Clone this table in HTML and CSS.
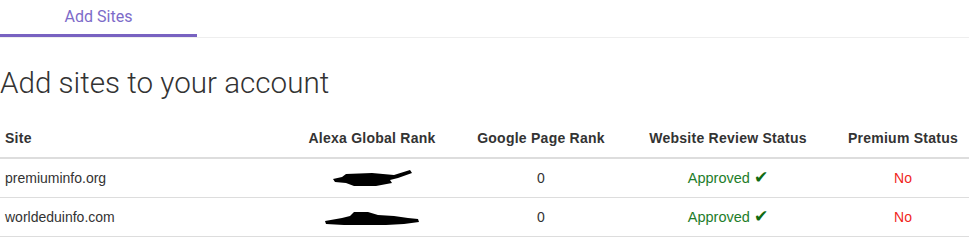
FILE: index.html
```html
<!DOCTYPE html>
<html lang="en">
<head>
    <meta charset="UTF-8">
    <meta name="viewport" content="width=device-width, initial-scale=1.0">
    <title>Add Sites</title>
    <link rel="stylesheet" href="styles.css">
</head>
<body>
    <div class="tabs">
        <a class="tab active" href="#">Add Sites</a>
    </div>

    <h1>Add sites to your account</h1>

    <table class="sites-table">
        <thead>
            <tr>
                <th class="col-site">Site</th>
                <th class="col-alexa">Alexa Global Rank</th>
                <th class="col-google">Google Page Rank</th>
                <th class="col-review">Website Review Status</th>
                <th class="col-premium">Premium Status</th>
            </tr>
        </thead>
        <tbody>
            <tr>
                <td>premiuminfo.org</td>
                <td class="center">
                    <!-- rank hidden -->
                    <svg class="redact" width="80" height="18" viewBox="0 0 80 18">
                        <path d="M1 9 L10 7 L14 4 L40 3 L62 5 L78 0 L80 3 L66 8 L58 10 L60 13 L44 16 L22 16 L14 13 L3 12 Z" fill="#000"/>
                    </svg>
                </td>
                <td class="center">0</td>
                <td class="center approved">Approved <span class="check">&#10004;</span></td>
                <td class="center no">No</td>
            </tr>
            <tr>
                <td>worldeduinfo.com</td>
                <td class="center">
                    <svg class="redact" width="96" height="18" viewBox="0 0 96 18">
                        <path d="M1 12 L18 9 L26 7 L30 3 L44 3 L54 6 L70 7 L84 9 L94 10 L95 13 L80 15 L62 16 L40 16 L20 16 L2 15 Z" fill="#000"/>
                    </svg>
                </td>
                <td class="center">0</td>
                <td class="center approved">Approved <span class="check">&#10004;</span></td>
                <td class="center no">No</td>
            </tr>
        </tbody>
    </table>
</body>
</html>
```

FILE: styles.css
```css
body {
    margin: 0;
    font-family: "Liberation Sans", Arial, sans-serif;
    font-size: 14px;
    color: #333;
    background: white;
}
.tabs {
    display: flex;
    border-bottom: 1px solid #eee;
    height: 37px;
}
.tab {
    display: block;
    width: 197px;
    box-sizing: border-box;
    padding-top: 7px;
    text-align: center;
    font-family: Roboto, sans-serif;
    font-size: 16px;
    color: #7d6bc9;
    text-decoration: none;
}
.tab.active {
    border-bottom: 3px solid #7862c1;
}
h1 {
    margin: 25px 0 0;
    font-family: Roboto, sans-serif;
    font-weight: 300;
    font-size: 29.6px;
    line-height: 40px;
    color: #333;
}
.sites-table {
    margin-top: 17px;
    width: 969px;
    border-collapse: collapse;
    table-layout: fixed;
}
.sites-table th,
.sites-table td {
    padding: 8px 5px;
    line-height: 22px;
}
.sites-table th {
    font-weight: bold;
    letter-spacing: 0.25px;
    text-align: center;
    border-bottom: 2px solid #ddd;
    line-height: 21px;
}
.sites-table th.col-site {
    text-align: left;
}
.sites-table td {
    border-bottom: 1px solid #ddd;
}
.col-site { width: 271px; }
.col-alexa { width: 172px; }
.col-google { width: 146px; }
.col-review { width: 208px; }
.col-premium { width: 122px; }
.center {
    text-align: center;
}
.redact {
    display: inline-block;
    vertical-align: middle;
}
.approved {
    color: #1e7d2a;
    font-size: 14.5px;
}
.check {
    font-family: "DejaVu Sans", sans-serif;
    font-size: 17px;
    line-height: 1;
    color: #0f6b12;
}
.no {
    color: #f0261c;
}
```
